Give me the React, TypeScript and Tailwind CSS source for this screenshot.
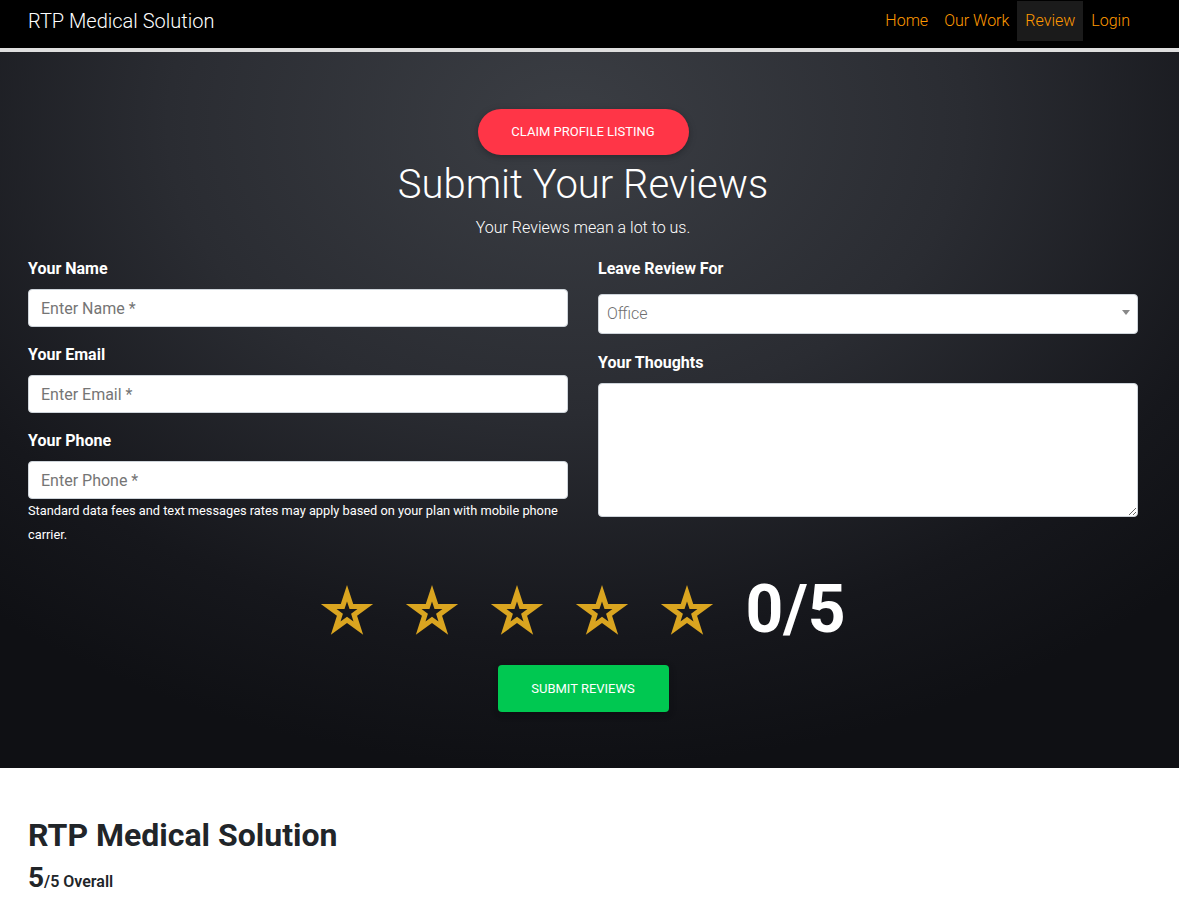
import React from "react";

function starPoints(cx: number, cy: number, R: number, r: number) {
  const pts: string[] = [];
  for (let i = 0; i < 10; i++) {
    const rad = i % 2 === 0 ? R : r;
    const a = ((-90 + i * 36) * Math.PI) / 180;
    pts.push(`${(cx + rad * Math.cos(a)).toFixed(2)},${(cy + rad * Math.sin(a)).toFixed(2)}`);
  }
  return "M" + pts.join("L") + "Z";
}

function StarOutline() {
  const d = starPoints(27, 27.5, 27.5, 10.6) + starPoints(27, 27.5, 11, 4.3);
  return (
    <svg width="54" height="51" viewBox="0 0 54 51" className="shrink-0">
      <path d={d} fill="#daa520" fillRule="evenodd" />
    </svg>
  );
}

const navLinks = ["Home", "Our Work", "Review", "Login"];

const inputCls =
  "mt-[8px] h-[38px] w-full rounded border border-[#ced4da] bg-white px-3 text-base text-[#495057] placeholder:text-[#757575] outline-none";

export default function App() {
  return (
    <div className="min-h-screen bg-white font-['Roboto',sans-serif]">
      {/* navbar */}
      <nav className="h-[52px] bg-black border-b-4 border-[#dedede]">
        <div className="ml-[28px] w-[1110px] flex justify-between">
          <a className="h-[42px] flex items-center text-[20px] font-light text-white">
            RTP Medical Solution
          </a>
          <ul className="flex pt-[1px]">
            {navLinks.map((l) => (
              <li key={l}>
                <a
                  className={`h-10 px-2 flex items-center text-base font-light text-[#ff9900] ${
                    l === "Review" ? "bg-[#1b1b1b]" : ""
                  }`}
                >
                  {l}
                </a>
              </li>
            ))}
          </ul>
        </div>
      </nav>

      {/* hero / form */}
      <section className="bg-[radial-gradient(ellipse_75%_90%_at_48%_10%,#3b3e44_0%,#2a2c32_45%,#16171c_80%,#0f1014_100%)] pt-[57px] pb-[56px]">
        <div className="ml-[28px] w-[1110px] flex flex-col items-center text-white">
          <button className="h-[46px] w-[211px] rounded-full bg-[#ff3547] text-[13px] font-normal uppercase text-white shadow-[0_2px_5px_0_rgba(0,0,0,0.16),0_2px_10px_0_rgba(0,0,0,0.12)]">
            Claim Profile Listing
          </button>
          <h1 className="mt-[3px] text-[40px] leading-[54px] font-light">Submit Your Reviews</h1>
          <p className="mt-[4px] text-base leading-6 font-light">Your Reviews mean a lot to us.</p>

          <div className="mt-[17px] w-full grid grid-cols-2 gap-x-[30px]">
            <div className="flex flex-col">
              <label className="text-base leading-6 font-bold">Your Name</label>
              <input placeholder="Enter Name *" className={inputCls} />
              <label className="mt-[16px] text-base leading-6 font-bold">Your Email</label>
              <input placeholder="Enter Email *" className={inputCls} />
              <label className="mt-[16px] text-base leading-6 font-bold">Your Phone</label>
              <input placeholder="Enter Phone *" className={inputCls} />
              <p className="text-[12.8px] leading-6">
                Standard data fees and text messages rates may apply based on your plan with mobile phone carrier.
              </p>
            </div>

            <div className="flex flex-col">
              <label className="text-base leading-6 font-bold">Leave Review For</label>
              <div className="relative mt-[13px]">
                <select className="h-10 w-full appearance-none rounded border border-[#ced4da] bg-white pl-2 text-base font-light text-[#6f6f6f] outline-none">
                  <option>Office</option>
                </select>
                <span className="pointer-events-none absolute right-[8px] top-[16px] h-0 w-0 border-x-[4px] border-t-[5px] border-x-transparent border-t-[#888]" />
              </div>
              <label className="mt-[17px] text-base leading-6 font-bold">Your Thoughts</label>
              <textarea className="mt-[8px] h-[134px] w-full rounded border border-[#ced4da] bg-white p-2 text-base text-[#495057] outline-none" />
            </div>
          </div>

          <div className="mt-[30px] h-[66px] flex items-center gap-[31px]">
            {[0, 1, 2, 3, 4].map((i) => (
              <StarOutline key={i} />
            ))}
            <span className="text-[66px] leading-none font-bold text-white">0/5</span>
          </div>

          <button className="mt-[22px] h-[47px] w-[171px] rounded-sm bg-[#00c851] text-[13px] uppercase text-white shadow-[0_2px_5px_0_rgba(0,0,0,0.16),0_2px_10px_0_rgba(0,0,0,0.12)]">
            Submit Reviews
          </button>
        </div>
      </section>

      {/* summary */}
      <section className="pt-[48px] pb-8">
        <div className="ml-[28px] w-[1110px] text-[#212529]">
          <h2 className="text-[32px] leading-[38px] font-bold">RTP Medical Solution</h2>
          <div className="mt-[7px] flex items-baseline">
            <span className="text-[28px] leading-[34px] font-bold">5</span>
            <span className="text-[16px] font-semibold">/5 Overall</span>
          </div>
        </div>
      </section>
    </div>
  );
}
